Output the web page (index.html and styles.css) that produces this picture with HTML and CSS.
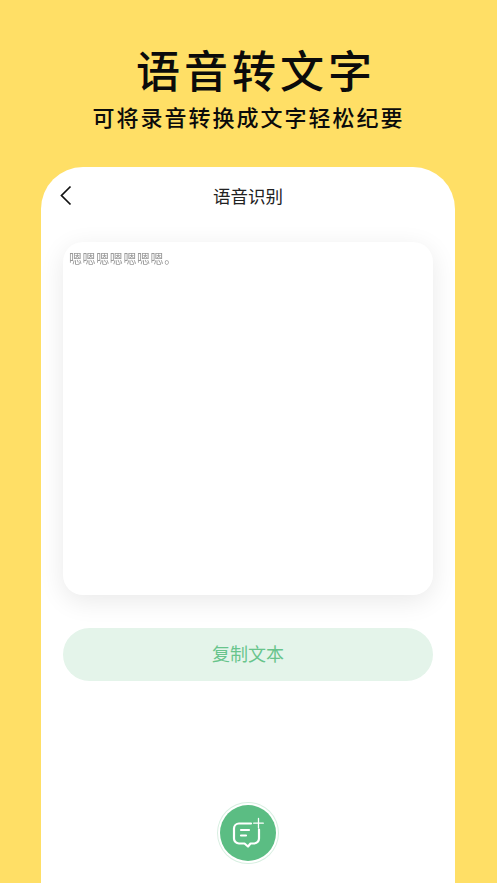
FILE: index.html
```html
<!DOCTYPE html>
<html lang="zh-CN">
<head>
<meta charset="utf-8">
<title>语音转文字</title>
<link rel="stylesheet" href="styles.css">
</head>
<body>
<header class="hero">
  <h1 class="hero-title">语音转文字</h1>
  <p class="hero-sub">可将录音转换成文字轻松纪要</p>
</header>
<main class="phone">
  <div class="nav">
    <svg class="back" width="14" height="22" viewBox="0 0 14 22" fill="none" stroke="#111" stroke-width="1.7"><path d="M11.500 1.500 2.500 10.500 11.500 19.500"/></svg>
    <span class="nav-title">语音识别</span>
  </div>
  <section class="text-card"><p class="result">嗯嗯嗯嗯嗯嗯嗯。</p></section>
  <button class="copy">复制文本</button>
  <div class="fab-wrap">
    <div class="fab">
      <svg width="36" height="36" viewBox="0 0 36 36" fill="none" stroke="#fff" stroke-width="2.200" stroke-linecap="round" stroke-linejoin="round">
        <path d="M21 8.500H9a5 5 0 0 0-5 5v10a5 5 0 0 0 5 5h5.500l3.500 3 2.500-3H24a5 5 0 0 0 5-5v-9"/>
        <path d="M11 15h8M11 20.500h5"/>
        <path d="M28.500 3.500v9.500M23.700 8.200h9.600" stroke-width="1.300"/>
      </svg>
    </div>
  </div>
</main>
</body>
</html>
```
FILE: styles.css
```css
* { box-sizing: border-box; }
html, body { margin: 0; height: 883px; overflow: hidden; }
body {
  background: #ffdf66;
  font-family: "Noto Sans CJK SC", "Noto Sans", sans-serif;
  display: flex;
  flex-direction: column;
  align-items: flex-start;
}
.hero { width: 100%; height: 167px; padding-top: 39px; text-align: center; color: #0b0b0b; }
.hero-title { margin: 0 0 0 15px; font-size: 44px; line-height: 60px; font-weight: 500; letter-spacing: 4px; }
.hero-sub { margin: 2px 0 0; font-size: 22px; line-height: 30px; font-weight: 500; letter-spacing: 2px; white-space: nowrap; }
.phone {
  width: 414px;
  height: 716px;
  margin-left: 41px;
  background: #fff;
  border-radius: 42px 42px 0 0;
  padding: 0 22px;
  display: flex;
  flex-direction: column;
}
.nav { height: 75px; position: relative; display: flex; justify-content: center; padding-top: 16px; }
.back { position: absolute; left: -4px; top: 18px; }
.nav-title { font-size: 17.500px; line-height: 26px; color: #222; }
.text-card {
  height: 353px;
  background: #fff;
  border-radius: 20px;
  box-shadow: 0 6px 26px rgba(0, 0, 0, 0.09);
  padding: 6px 6px;
}
.result { margin: 0; font-size: 13px; line-height: 20px; letter-spacing: 0.600px; color: #999; filter: grayscale(1); }
.copy {
  margin-top: 33px;
  height: 53px;
  border: 0;
  border-radius: 27px;
  background: #e4f4ea;
  color: #68c48c;
  font: 400 18px/50px "Noto Sans CJK SC", sans-serif;
  padding: 0 0 3px;
}
.fab-wrap { margin-top: 123.500px; display: flex; justify-content: center; }
.fab {
  width: 56px;
  height: 56px;
  border-radius: 50%;
  background: #5bbd83;
  border: 0;
  box-shadow: 0 0 0 2px #fff, 0 0 0 3px #d8efe1;
  display: flex;
  align-items: center;
  justify-content: center;
}
```
